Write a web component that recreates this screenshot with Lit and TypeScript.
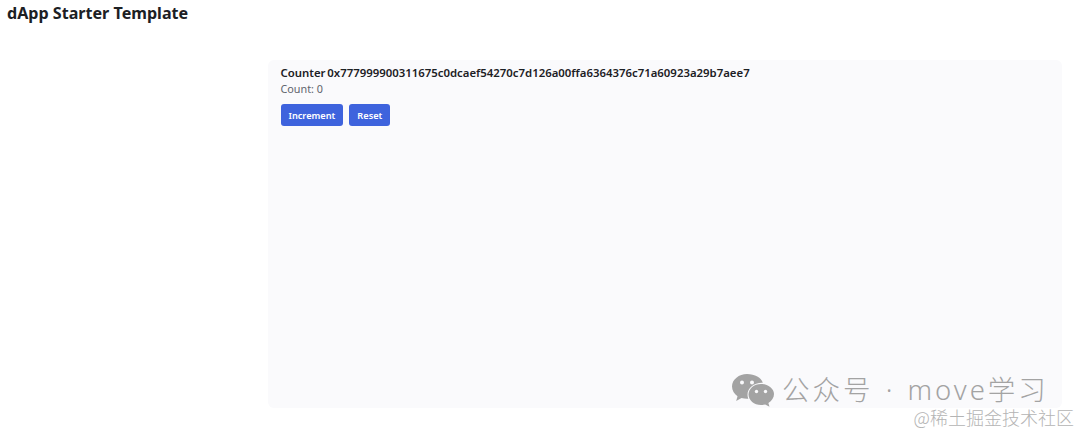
import {html, css, LitElement} from 'lit';
import {customElement} from 'lit/decorators.js';

@customElement('app-root')
export class AppRoot extends LitElement {
  static styles = css`
    :host {
      display: block;
      position: relative;
      height: 433px;
      overflow: hidden;
      background: #fff;
      font-family: "Noto Sans", "Open Sans", sans-serif;
      color: #1c2024;
    }
    .header {
      padding: 2px 7px 0;
      height: 60px;
      box-sizing: border-box;
    }
    h1 {
      margin: 0;
      font-size: 16.1px;
      line-height: 22px;
      font-weight: 700;
    }
    .card {
      margin-left: 268px;
      width: 794px;
      height: 348px;
      box-sizing: border-box;
      padding: 5px 12.5px;
      background: #fafafc;
      border-radius: 6px;
    }
    h2 {
      margin: 0;
      font-size: 11.38px;
      word-spacing: -1.2px;
      line-height: 16px;
      font-weight: 600;
    }
    .count {
      font-size: 10.8px;
      line-height: 16px;
      color: #60646c;
    }
    .actions {
      display: flex;
      gap: 6px;
      margin-top: 7px;
    }
    button {
      height: 22px;
      padding: 0 8px;
      border: none;
      border-radius: 3px;
      background: #3e63dd;
      color: #fff;
      font: 600 9.2px "Noto Sans", sans-serif;
    }
    .mark {
      position: absolute;
      left: 732px;
      top: 373px;
      display: flex;
      align-items: center;
      gap: 8px;
      color: #a3a3a3;
      font-size: 27.5px;
      letter-spacing: 3px;
      word-spacing: 2px;
      line-height: 30px;
      font-weight: 300;
      font-family: "Noto Sans", "Noto Sans CJK SC", sans-serif;
      white-space: nowrap;
    }
    .mark svg {
      width: 42px;
      height: 34px;
      display: block;
    }
    .credit {
      position: absolute;
      right: 6px;
      top: 407px;
      color: #b4b4b4;
      font-size: 18px;
      line-height: 20px;
      font-family: "Noto Sans CJK SC", sans-serif;
      font-weight: 300;
      white-space: nowrap;
    }
  `;

  render() {
    return html`
      <div class="header"><h1>dApp Starter Template</h1></div>
      <div class="card">
        <h2>Counter 0x777999900311675c0dcaef54270c7d126a00ffa6364376c71a60923a29b7aee7</h2>
        <div class="count">Count: 0</div>
        <div class="actions">
          <button>Increment</button>
          <button>Reset</button>
        </div>
      </div>
      <div class="mark">
        <svg viewBox="0 0 42 34" aria-hidden="true">
          <path fill="#a3a3a3" d="M15 1C7 1 0 6.500 0 13.500c0 4 2.200 7.300 5.500 9.700L4.200 28l5.300-3c1.700.5 3.500.8 5.500.8h1.300c-.5-1.300-.8-2.600-.8-4 0-6.800 6.500-12 14.300-12h1C29.500 4.800 22.800 1 15 1z"/>
          <circle cx="10" cy="9.500" r="2" fill="#f9f9fb"/>
          <circle cx="20" cy="9.500" r="2" fill="#f9f9fb"/>
          <path fill="#a3a3a3" d="M29 11c-7 0-12.500 4.700-12.500 10.500S22 32 29 32c1.500 0 2.900-.2 4.200-.6l4.300 2.400-1.100-3.900c3.400-2 5.600-5.200 5.600-8.900C42 15.700 36 11 29 11z"/>
          <circle cx="24.500" cy="18.500" r="1.700" fill="#f9f9fb"/>
          <circle cx="33.500" cy="18.500" r="1.700" fill="#f9f9fb"/>
        </svg>
        <span>公众号 · move学习</span>
      </div>
      <div class="credit">@稀土掘金技术社区</div>
    `;
  }
}
